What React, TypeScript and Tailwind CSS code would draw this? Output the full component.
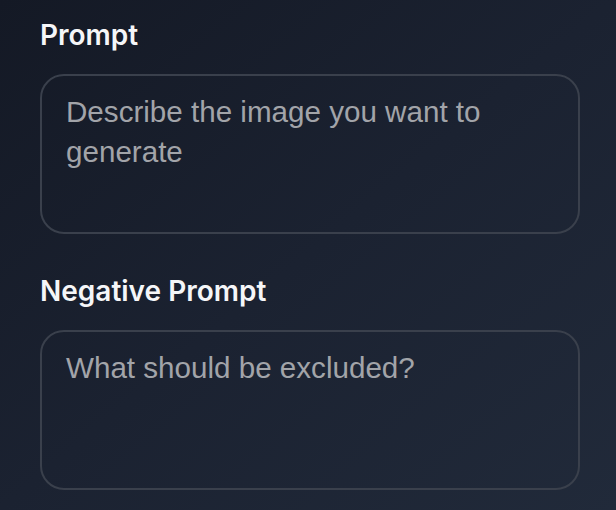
import React from 'react';

const fieldClass =
  "block h-[160px] w-full resize-none rounded-[24px] border-2 border-[#3a404c] bg-transparent px-[24px] py-[16px] font-['Liberation_Sans',Arial,sans-serif] text-[29.6px] leading-[40px] text-gray-200 placeholder:text-[#a2a4a9] outline-none";

const labelClass = 'block text-[28px] font-semibold leading-[48px] text-[#f5f6f8] mb-[15px]';

export default function App() {
  return (
    <div className="min-h-[510px] w-full bg-gradient-to-br from-[#141925] via-[#1b2231] to-[#212a3a] pl-10 pr-[36px] pt-[11px] font-['Inter','Noto_Sans',sans-serif]">
      <label className={labelClass}>Prompt</label>
      <textarea className={fieldClass} placeholder="Describe the image you want to generate" />
      <label className={`mt-[33px] ${labelClass}`}>Negative Prompt</label>
      <textarea className={fieldClass} placeholder="What should be excluded?" />
    </div>
  );
}
